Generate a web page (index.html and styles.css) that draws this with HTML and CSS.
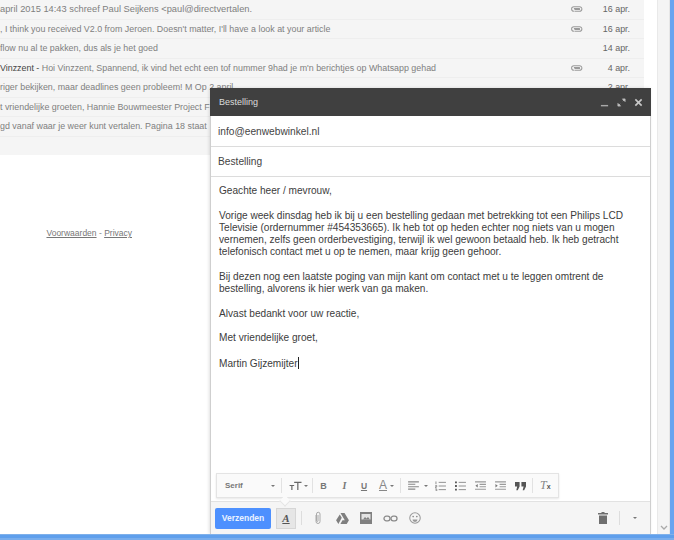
FILE: index.html
```html
<!DOCTYPE html>
<html lang="nl">
<head>
<meta charset="utf-8">
<title>Bestelling</title>
<link rel="stylesheet" href="styles.css">
</head>
<body>
<div class="window">
  <div class="viewport">
    <main class="page">
      <div class="list">
        <div class="row"><span class="snip snip-wide">april 2015 14:43 schreef Paul Seijkens &lt;paul@directvertalen.</span><svg class="clip" viewBox="0 0 14 8"><path d="M4 6.700h6a2.700 2.700 0 0 0 0-5.400H3.400a2.700 2.700 0 0 0 0 5.400M4 4.600h6.600M3.400 3.400h7" fill="none" stroke="#9a9a9a" stroke-width="1.200"/></svg><span class="date">16 apr.</span></div>
        <div class="row"><span class="snip">, I think you received V2.0 from Jeroen. Doesn't matter, I'll have a look at your article</span><svg class="clip" viewBox="0 0 14 8"><path d="M4 6.700h6a2.700 2.700 0 0 0 0-5.400H3.400a2.700 2.700 0 0 0 0 5.400M4 4.600h6.600M3.400 3.400h7" fill="none" stroke="#9a9a9a" stroke-width="1.200"/></svg><span class="date">16 apr.</span></div>
        <div class="row"><span class="snip">flow nu al te pakken, dus als je het goed</span><span class="date">14 apr.</span></div>
        <div class="row"><span class="snip"><b class="sender">Vinzzent -</b> Hoi Vinzzent, Spannend, ik vind het echt een tof nummer 9had je m'n berichtjes op Whatsapp gehad</span><svg class="clip" viewBox="0 0 14 8"><path d="M4 6.700h6a2.700 2.700 0 0 0 0-5.400H3.400a2.700 2.700 0 0 0 0 5.400M4 4.600h6.600M3.400 3.400h7" fill="none" stroke="#9a9a9a" stroke-width="1.200"/></svg><span class="date">4 apr.</span></div>
        <div class="row"><span class="snip">riger bekijken, maar deadlines geen probleem! M Op 2 april</span><span class="date">2 apr.</span></div>
        <div class="row"><span class="snip">t vriendelijke groeten, Hannie Bouwmeester Project F</span></div>
        <div class="row"><span class="snip">gd vanaf waar je weer kunt vertalen. Pagina 18 staat</span></div>
      </div>
      <p class="footer"><a href="#">Voorwaarden</a> - <a href="#">Privacy</a></p>
    </main>
    <div class="scrollbar"><svg class="arrow" viewBox="0 0 8 5"><path d="M1 1l3 3 3-3" fill="none" stroke="#a9a9a9" stroke-width="1.300"/></svg></div>

    <section class="compose">
      <header class="compose-head">
        <span>Bestelling</span>
        <span class="head-icons">
          <svg viewBox="0 0 10 10"><path d="M1 8.500h8" stroke="#a8a8a8" stroke-width="1.600"/></svg>
          <svg viewBox="0 0 10 10"><path d="M1.500 8.500l2-2M8.500 1.500l-2 2M6 1h3v3L6 1zM1 6l3 3H1V6z" stroke="#c2c2c2" fill="#c2c2c2" stroke-width=".8"/></svg>
          <svg viewBox="0 0 10 10"><path d="M1.500 1.500l7 7M8.500 1.500l-7 7" stroke="#c8c8c8" stroke-width="1.800"/></svg>
        </span>
      </header>
      <div class="field field-to">info@eenwebwinkel.nl</div>
      <div class="field field-subject">Bestelling</div>
      <div class="body-text">
        <p>Geachte heer / mevrouw,</p>
        <p>Vorige week dinsdag heb ik bij u een bestelling gedaan met betrekking tot een Philips LCD<br>Televisie (ordernummer #454353665). Ik heb tot op heden echter nog niets van u mogen<br>vernemen, zelfs geen orderbevestiging, terwijl ik wel gewoon betaald heb. Ik heb getracht<br>telefonisch contact met u op te nemen, maar krijg geen gehoor.</p>
        <p>Bij dezen nog een laatste poging van mijn kant om contact met u te leggen omtrent de<br>bestelling, alvorens ik hier werk van ga maken.</p>
        <p>Alvast bedankt voor uw reactie,</p>
        <p>Met vriendelijke groet,</p>
        <p>Martin Gijzemijter<span class="caret"></span></p>
      </div>
      <div class="format-bar">
        <span class="font-select">Serif<i class="tri"></i></span>
        <span class="sep sep-font"></span>
        <span class="tool size-tool"><svg viewBox="0 0 14 12"><path d="M5 2.500h8M9 2.500V11M0 6h5M2.500 6v5" stroke="#666" stroke-width="1.300" fill="none"/></svg><i class="tri"></i></span>
        <span class="sep sep-size"></span>
        <b class="tool glyph bold">B</b>
        <i class="tool glyph serif">I</i>
        <u class="tool glyph plain">U</u>
        <span class="tool color-tool"><span class="color-a">A</span><i class="tri"></i></span>
        <span class="sep sep-color"></span>
        <span class="tool align-tool"><svg viewBox="0 0 12 10"><path d="M0 1h12M0 3.700h8M0 6.300h12M0 9h8" stroke="#888" stroke-width="1.200"/></svg><i class="tri"></i></span>
        <svg class="tool-icon first" viewBox="0 0 12 11"><path d="M4 1.500h8M4 5.500h8M4 9.500h8M1 .5v3M.3 5h1.600v1.300H.3v1.300h1.600M.3 9h1.600v2H.3" stroke="#888" fill="none" stroke-width="1"/></svg>
        <svg class="tool-icon" viewBox="0 0 12 11"><path d="M4 1.500h8M4 5.500h8M4 9.500h8" stroke="#888" stroke-width="1"/><path d="M0 .5h2v2H0zM0 4.500h2v2H0zM0 8.500h2v2H0z" fill="#555"/></svg>
        <svg class="tool-icon" viewBox="0 0 12 11"><path d="M0 1h12M5 3.700h7M5 6.300h7M0 9h12" stroke="#999" stroke-width="1.200"/><path d="M3 3.200v4L.4 5.200z" fill="#777"/></svg>
        <svg class="tool-icon" viewBox="0 0 12 11"><path d="M0 1h12M5 3.700h7M5 6.300h7M0 9h12" stroke="#999" stroke-width="1.200"/><path d="M.4 3.200v4L3 5.200z" fill="#777"/></svg>
        <svg class="tool-icon" viewBox="0 0 12 9"><path d="M0 0h5v5L3 9H1.400l1-4H0zM7 0h5v5l-2 4H8.400l1-4H7z" fill="#555"/></svg>
        <span class="sep sep-quote"></span>
        <span class="clear-format"><em>T</em><small>x</small></span>
      </div>
      <footer class="compose-foot">
        <button class="send" type="button">Verzenden</button>
        <span class="format-toggle">A</span>
        <span class="foot-sep sep-left"></span>
        <svg class="foot-icon attach" viewBox="0 0 8 14"><path d="M2 4v6.500a2 2 0 0 0 4 0V3a1.500 1.500 0 0 0-3.500 0v7a.8.8 0 0 0 1.500 0V4" fill="none" stroke="#aaa" stroke-width="1"/></svg>
        <svg class="foot-icon drive" viewBox="0 0 14 12"><path d="M4.800 0h4.400l4.800 8H9.500zM4 1.500L6.200 5.200 2.500 12 0 8zM7 8h7l-2.400 4H4.700z" fill="#7f7f7f"/></svg>
        <svg class="foot-icon photo" viewBox="0 0 12 12"><path d="M0 0h12v12H0z" fill="#808080"/><path d="M1.500 2h9v5.500h-9z" fill="#e4e4e4"/><path d="M3 7.500l2-2.500 1.500 1.500L8 5l2 2.500z" fill="#808080"/></svg>
        <svg class="foot-icon link" viewBox="0 0 15 7"><rect x="1" y="1.200" width="6" height="4.600" rx="2.300" fill="none" stroke="#8a8a8a" stroke-width="1.300"/><rect x="8" y="1.200" width="6" height="4.600" rx="2.300" fill="none" stroke="#8a8a8a" stroke-width="1.300"/></svg>
        <svg class="foot-icon smile" viewBox="0 0 13 13"><circle cx="6.500" cy="6.500" r="5.700" fill="none" stroke="#999" stroke-width="1.100"/><circle cx="4.500" cy="5" r=".9" fill="#888"/><circle cx="8.500" cy="5" r=".9" fill="#888"/><path d="M3.800 8h5.400a2.700 2.700 0 0 1-5.400 0z" fill="#999"/></svg>
        <span class="foot-right">
          <svg class="trash" viewBox="0 0 10 12"><path d="M3.500 0h3v1H10v1.500H0V1h3.500zM1 3.500h8V12H1z" fill="#6f6f6f"/></svg>
          <span class="foot-sep"></span>
          <i class="tri more"></i>
        </span>
      </footer>
      <span class="pointer"></span>
    </section>
  </div>
  <div class="frame-bottom"></div>
</div>
</body>
</html>
```

FILE: styles.css
```css
* { box-sizing: border-box; }
html, body { margin: 0; height: 100%; }
body {
  width: 674px;
  height: 540px;
  overflow: hidden;
  background: #fff;
  font-family: "Liberation Sans", Arial, sans-serif;
  color: #444;
}
.window { display: flex; flex-direction: column; height: 540px; }
.viewport {
  position: relative;
  flex: 1;
  display: flex;
  padding-right: 4px;
  background: linear-gradient(#68a4f0, #68a4f0) right / 4px 100% no-repeat #fff;
  overflow: hidden;
}
.frame-bottom {
  height: 6px;
  background: linear-gradient(#7fb0ea 0 1px, #5f9fec 1px 4px, #79adec 4px);
}
.page { flex: 1; min-width: 0; }
.list { width: 644px; height: 155px; background: #f5f5f5; overflow: hidden; }
.row {
  display: flex;
  align-items: center;
  height: 19.500px;
  border-bottom: 1px solid #eeeeee;
  font-size: 8.900px;
  color: #808080;
  white-space: nowrap;
}
.snip { flex: 1; min-width: 0; overflow: hidden; }
.snip-wide { font-size: 9.300px; }
.sender { font-weight: normal; color: #444; }
.clip { width: 12px; height: 8px; margin-right: 18px; }
.date { width: 29px; margin-right: 14px; text-align: right; color: #666; font-size: 8.900px; }
.footer {
  margin: 73px 0 0;
  width: 132px;
  text-align: right;
  font-size: 8.500px;
  color: #888;
}
.footer a { color: #777; }
.scrollbar {
  position: relative;
  width: 13px;
  background: #f4f4f4;
  border-left: 1px solid #e9e9e9;
  border-right: 1px solid #e6e6e6;
}
.arrow { position: absolute; left: 2px; bottom: 4px; width: 8px; height: 5px; }

.compose {
  position: absolute;
  left: 210px;
  top: 88px;
  width: 441px;
  height: 446px;
  display: flex;
  flex-direction: column;
  background: #fff;
  border: 1px solid #cfcfcf;
  border-top: 0;
  border-bottom: 0;
  box-shadow: -1px 0 3px rgba(0,0,0,.12);
}
.compose-head {
  display: flex;
  align-items: center;
  justify-content: space-between;
  flex: none;
  height: 28px;
  margin: 0 -1px;
  padding: 0 8px 0 9px;
  background: #404040;
  color: #dcdcdc;
  font-size: 9px;
}
.head-icons { display: flex; gap: 8px; }
.head-icons svg { width: 9px; height: 9px; }
.field {
  flex: none;
  display: flex;
  align-items: center;
  padding: 0 7px;
  border-bottom: 1px solid #dcdcdc;
  font-size: 10.200px;
  color: #444;
}
.field-to { height: 31px; }
.field-subject { height: 30px; }
.body-text {
  flex: 1;
  padding: 8px 8px 0;
  font-size: 10.100px;
  line-height: 12.250px;
  color: #3c3c3c;
}
.body-text p { margin: 0 0 12.250px; }
.caret { display: inline-block; width: 1px; height: 12px; background: #222; vertical-align: -2px; }
.format-bar {
  position: absolute;
  left: 5px;
  top: 385px;
  width: 343px;
  height: 25px;
  display: flex;
  align-items: center;
  padding: 0 0 0 8px;
  background: #fafafa;
  border: 1px solid #e4e4e4;
  box-shadow: 0 1px 2px rgba(0,0,0,.1);
  color: #666;
}
.font-select {
  display: flex;
  align-items: center;
  justify-content: space-between;
  width: 50px;
  font-size: 8px;
  font-weight: bold;
  color: #777;
}
.sep { flex: none; width: 1px; height: 15px; background: #e2e2e2; }
.sep-font { margin-left: 6px; }
.sep-size { margin-left: 4px; }
.sep-color { margin-left: 6px; }
.sep-quote { margin-left: 6px; }
.tool { display: inline-flex; align-items: center; flex: none; }
.tri {
  display: inline-block;
  flex: none;
  width: 0;
  height: 0;
  border: 2px solid transparent;
  border-top: 2px solid #777;
  border-bottom: 0;
}
.size-tool { margin-left: 7px; gap: 1px; }
.size-tool svg { width: 14px; height: 11px; }
.glyph { width: 11px; justify-content: center; font-size: 9px; color: #777; }
.bold { margin-left: 5px; }
.glyph.serif { margin-left: 10px; font-family: "Liberation Serif", serif; font-weight: bold; font-size: 10px; }
.glyph.plain { margin-left: 8.500px; font-weight: bold; font-size: 8.500px; }
.color-tool { margin-left: 9.500px; gap: 3px; }
.color-a { font-size: 12px; border-bottom: 1px solid #888; line-height: 10px; color: #888; }
.align-tool { margin-left: 7px; gap: 5px; }
.align-tool svg { width: 11px; height: 9px; }
.tool-icon { flex: none; width: 11px; height: 10px; margin-left: 9px; }
.tool-icon.first { margin-left: 7px; }
.clear-format { margin-left: 7px; font-family: "Liberation Serif", serif; font-size: 12px; color: #888; }
.clear-format small { font-size: 7px; color: #555; font-family: "Liberation Sans", sans-serif; font-weight: bold; }
.compose-foot {
  flex: none;
  display: flex;
  align-items: center;
  height: 33px;
  padding: 0 4px;
  background: #f5f5f5;
  border-top: 1px solid #e2e2e2;
}
.send {
  flex: none;
  width: 56px;
  height: 21px;
  padding: 0;
  border: 0;
  border-radius: 2px;
  background: #4d90fe;
  color: #eaf2ff;
  font: bold 8.500px "Liberation Sans", sans-serif;
}
.format-toggle {
  flex: none;
  width: 20px;
  height: 21px;
  margin-left: 5px;
  display: flex;
  align-items: center;
  justify-content: center;
  background: #e6e6e6;
  border: 1px solid #d6d6d6;
  font: italic bold 11px "Liberation Serif", serif;
  text-decoration: underline;
  color: #555;
}
.foot-sep { flex: none; width: 1px; height: 14px; margin: 0 10px; background: #dddddd; }
.sep-left { margin: 0 12px 0 5px; }
.foot-icon { flex: none; }
.attach { width: 8px; height: 14px; }
.drive { width: 13px; height: 11px; margin-left: 14px; }
.photo { width: 12px; height: 12px; margin-left: 11px; }
.link { width: 15px; height: 7px; margin-left: 11px; }
.smile { width: 12px; height: 12px; margin-left: 11px; }
.foot-right { margin-left: auto; display: flex; align-items: center; }
.trash { width: 10px; height: 12px; margin-right: 1px; }
.more { margin: 0 9px 0 3px; }
.pointer {
  position: absolute;
  left: 70px;
  top: 409px;
  width: 8px;
  height: 8px;
  background: #fafafa;
  border-right: 1px solid #e4e4e4;
  border-bottom: 1px solid #e4e4e4;
  transform: rotate(45deg);
}
```
